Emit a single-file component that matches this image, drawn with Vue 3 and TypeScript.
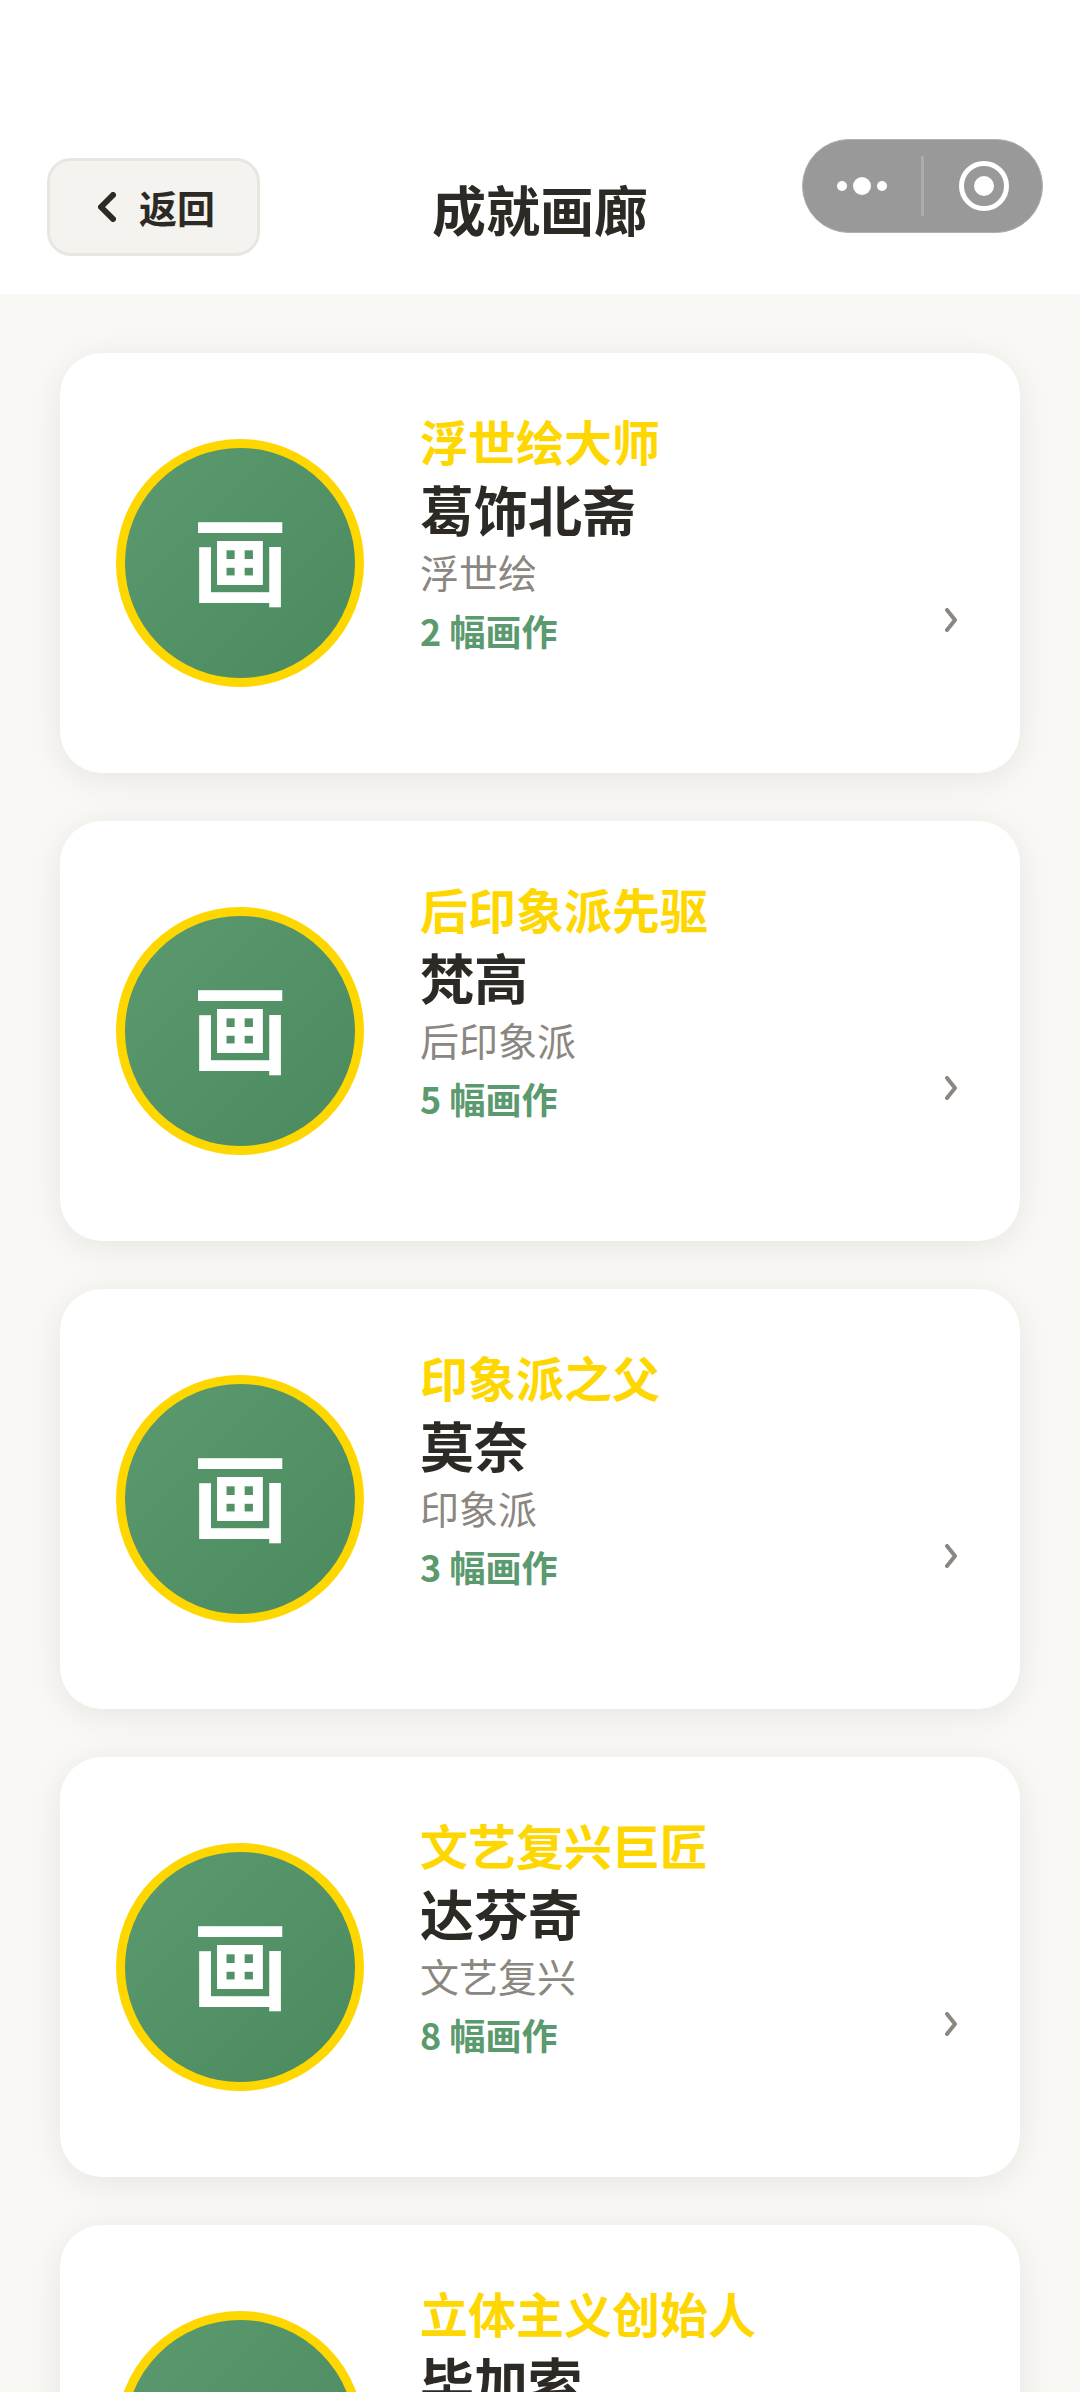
<script setup lang="ts">
interface Artist {
  id: string
  honor: string
  name: string
  movement: string
  works: number
}

const artists: Artist[] = [
  { id: 'hokusai', honor: '浮世绘大师', name: '葛饰北斋', movement: '浮世绘', works: 2 },
  { id: 'van-gogh', honor: '后印象派先驱', name: '梵高', movement: '后印象派', works: 5 },
  { id: 'monet', honor: '印象派之父', name: '莫奈', movement: '印象派', works: 3 },
  { id: 'da-vinci', honor: '文艺复兴巨匠', name: '达芬奇', movement: '文艺复兴', works: 8 },
  { id: 'picasso', honor: '立体主义创始人', name: '毕加索', movement: '立体主义', works: 6 },
]

function goBack(): void {
  window.history.back()
}
</script>

<template>
  <div class="page">
    <header class="header">
      <button class="back" type="button" @click="goBack">
        <svg class="back-icon" viewBox="0 0 18 30" aria-hidden="true">
          <path d="M15 3 3 15l12 12" />
        </svg>
        <span>返回</span>
      </button>
      <h1 class="title">成就画廊</h1>
      <div class="capsule">
        <button class="capsule-btn" type="button" aria-label="更多">
          <svg width="50" height="18" viewBox="0 0 50 18">
            <circle cx="5" cy="9" r="5" />
            <circle cx="25" cy="9" r="9" />
            <circle cx="45" cy="9" r="5" />
          </svg>
        </button>
        <span class="capsule-line"></span>
        <button class="capsule-btn" type="button" aria-label="关闭">
          <svg width="50" height="50" viewBox="0 0 50 50">
            <circle class="ring" cx="25" cy="25" r="22.5" />
            <circle cx="25" cy="25" r="10" />
          </svg>
        </button>
      </div>
    </header>

    <main class="content">
      <ul class="list">
        <li v-for="artist in artists" :key="artist.id">
          <a class="card" :href="'#' + artist.id">
            <span class="avatar">画</span>
            <span class="info">
              <span class="honor">{{ artist.honor }}</span>
              <span class="name">{{ artist.name }}</span>
              <span class="movement">{{ artist.movement }}</span>
              <span class="works">{{ artist.works }} 幅画作</span>
            </span>
            <svg class="arrow" viewBox="0 0 12 24" aria-hidden="true">
              <path d="M2 2l8 10-8 10" />
            </svg>
          </a>
        </li>
      </ul>
    </main>
  </div>
</template>

<style>
body {
  background: #f9f8f5;
}
</style>

<style scoped>
.page {
  display: flex;
  flex-direction: column;
  height: 100vh;
  background: #f9f8f5;
  color: #2d2a26;
  font-family: "Noto Sans CJK SC", "Noto Sans", sans-serif;
}

.header {
  position: relative;
  display: grid;
  grid-template-columns: 1fr auto 1fr;
  align-items: center;
  flex: none;
  padding: 158px 47px 38px;
  background: #fff;
}

.back {
  display: flex;
  align-items: center;
  justify-content: center;
  justify-self: start;
  gap: 23px;
  padding: 17px 42px 18px 48px;
  border: 3px solid #e8e6e1;
  border-radius: 24px;
  background: #f4f3ef;
  color: inherit;
  font: bold 38px/57px "Noto Sans CJK SC", "Noto Sans", sans-serif;
  cursor: pointer;
}

.back-icon {
  width: 18px;
  height: 30px;
  fill: none;
  stroke: currentColor;
  stroke-width: 6;
  stroke-linecap: round;
  stroke-linejoin: round;
}

.title {
  margin: 4px 0 0;
  font-size: 54px;
  line-height: 72px;
}

.capsule {
  position: absolute;
  top: 139px;
  right: 37px;
  display: flex;
  align-items: center;
  box-sizing: border-box;
  width: 241px;
  height: 94px;
  border: 1px solid #b0b0b0;
  border-radius: 47px;
  background: #999;
}

.capsule-btn {
  display: flex;
  flex: 1;
  align-items: center;
  justify-content: center;
  padding: 0;
  border: 0;
  background: none;
  fill: #fff;
}

.capsule-line {
  width: 3px;
  height: 60px;
  margin: 0 1px;
  background: #adadad;
}

.ring {
  fill: none;
  stroke: #fff;
  stroke-width: 5;
}

.content {
  flex: 1;
  min-height: 0;
  padding: 0 60px;
  overflow-y: auto;
  scrollbar-width: none;
}

.list {
  display: flex;
  flex-direction: column;
  gap: 48px;
  margin: 0;
  padding: 59px 0;
  list-style: none;
}

.card {
  display: flex;
  align-items: center;
  gap: 56px;
  box-sizing: border-box;
  min-height: 420px;
  padding: 56px;
  border-radius: 42px;
  background: #fff;
  box-shadow: 0 6px 36px rgba(0, 0, 0, 0.08);
  color: inherit;
  text-decoration: none;
}

.avatar {
  display: flex;
  align-items: center;
  justify-content: center;
  flex: none;
  box-sizing: border-box;
  width: 248px;
  height: 248px;
  padding-bottom: 12px;
  border: 9px solid #ffd700;
  border-radius: 50%;
  background: linear-gradient(135deg, #5a9a6e, #4a8a5e);
  color: #fff;
  font-size: 96px;
  font-weight: bold;
  line-height: 140px;
}

.info {
  display: flex;
  flex: 1;
  flex-direction: column;
  align-self: flex-start;
  gap: 6px;
}

.honor {
  color: #ffd700;
  font-size: 48px;
  font-weight: bold;
  line-height: 62px;
}

.name {
  font-size: 54px;
  font-weight: bold;
  line-height: 64px;
}

.movement {
  color: #8b8680;
  font-size: 39px;
  line-height: 48px;
}

.works {
  color: #5a9a6e;
  font-size: 36px;
  font-weight: bold;
  line-height: 58px;
}

.arrow {
  flex: none;
  width: 12px;
  height: 24px;
  margin: 114px 7px 0 0;
  fill: none;
  stroke: #8b8680;
  stroke-width: 4;
  stroke-linecap: round;
  stroke-linejoin: round;
}
</style>
